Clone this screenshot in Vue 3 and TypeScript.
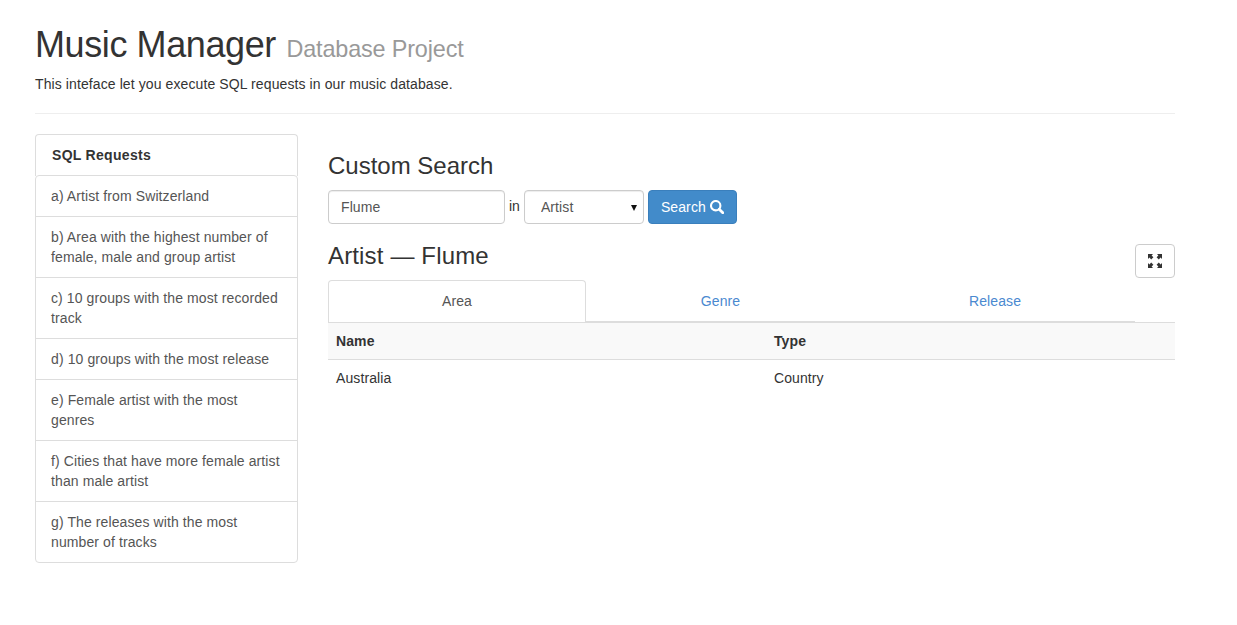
<script setup lang="ts">
const requests: string[] = [
  'a) Artist from Switzerland',
  'b) Area with the highest number of female, male and group artist',
  'c) 10 groups with the most recorded track',
  'd) 10 groups with the most release',
  'e) Female artist with the most genres',
  'f) Cities that have more female artist than male artist',
  'g) The releases with the most number of tracks',
]
</script>

<template>
  <div class="page">
    <header class="head">
      <h1>Music Manager <small>Database Project</small></h1>
      <p>This inteface let you execute SQL requests in our music database.</p>
    </header>
    <hr />
    <div class="columns">
      <aside class="panel">
        <div class="panel-title">SQL Requests</div>
        <div class="list">
          <a v-for="r in requests" :key="r" class="item">{{ r }}</a>
        </div>
      </aside>
      <main class="content">
        <h3 class="h-custom">Custom Search</h3>
        <form class="search" @submit.prevent>
          <input class="input" value="Flume" />
          <span class="in">in</span>
          <div class="select-wrap">
            <select class="select">
              <option>Artist</option>
            </select>
            <span class="caret"></span>
          </div>
          <button class="btn-primary" type="button">
            Search
            <svg class="search-icon" viewBox="0 0 14 14" width="14" height="14" aria-hidden="true">
              <circle cx="5.7" cy="5.7" r="4.7" fill="none" stroke="#fff" stroke-width="2.1" />
              <path d="M9.2 9.2l3.6 3.6" stroke="#fff" stroke-width="2.8" stroke-linecap="round" />
            </svg>
          </button>
        </form>
        <div class="result-head">
          <h3 class="h-result">Artist — Flume</h3>
          <button class="btn-full" type="button" aria-label="Fullscreen">
            <svg viewBox="0 0 14 14" width="14" height="14" aria-hidden="true">
              <path fill="#333" d="M0 0h5L3.6 1.4 5.4 3.2 3.2 5.4 1.4 3.6 0 5zM14 0v5l-1.4-1.4-1.8 1.8-2.2-2.2 1.8-1.8L9 0zM0 14V9l1.4 1.4 1.8-1.8 2.2 2.2-1.8 1.8L5 14zM14 14H9l1.4-1.4-1.8-1.8 2.2-2.2 1.8 1.8L14 9z" />
            </svg>
          </button>
        </div>
        <div class="tabs">
          <div class="tab active area">Area</div>
          <div class="tab genre">Genre</div>
          <div class="tab release">Release</div>
        </div>
        <table class="table">
          <thead>
            <tr><th>Name</th><th>Type</th></tr>
          </thead>
          <tbody>
            <tr><td>Australia</td><td>Country</td></tr>
          </tbody>
        </table>
      </main>
    </div>
  </div>
</template>

<style>
html, body { margin: 0; background: #fff; }
</style>

<style scoped>
.page {
  width: 1140px;
  margin-left: 35px;
  font-family: "Liberation Sans", Arial, sans-serif;
  font-size: 14px;
  line-height: 20px;
  letter-spacing: 0.1px;
  color: #333;
}
.head { padding-top: 25px; }
h1 {
  margin: 0 0 9px;
  font-size: 36px;
  font-weight: 500;
  line-height: 39.6px;
  letter-spacing: -0.4px;
}
h1 small {
  margin-left: 1px;
  font-size: 23.4px;
  font-weight: 400;
  line-height: 1;
  letter-spacing: -0.15px;
  color: #999;
}
.head p { margin: 0; }
hr {
  margin: 19px 0 20px;
  border: 0;
  border-top: 1px solid #eee;
}
.columns { display: flex; align-items: flex-start; gap: 30px; }
.panel {
  width: 263px;
  box-sizing: border-box;
  flex: none;
}
.panel-title {
  box-sizing: border-box;
  height: 42px;
  padding: 10px 16px;
  border: 1px solid #ddd;
  border-bottom: 0;
  border-radius: 4px 4px 0 0;
  font-weight: 700;
  letter-spacing: 0.3px;
}
.list { display: flex; flex-direction: column; margin-top: -1px; }
.item {
  display: block;
  padding: 10px 15px;
  border: 1px solid #ddd;
  margin-bottom: -1px;
  color: #555;
}
.item:first-child { border-radius: 4px 4px 0 0; }
.item:last-child { border-radius: 0 0 4px 4px; margin-bottom: 0; }
.content { flex: 1; min-width: 0; padding-top: 19px; }
h3 {
  margin: 0;
  font-size: 24px;
  font-weight: 500;
  line-height: 26.4px;
  letter-spacing: 0;
}
.h-result { letter-spacing: 0.15px; }
.search { display: flex; align-items: center; margin-top: 11px; }
.input, .select {
  box-sizing: border-box;
  height: 34px;
  border: 1px solid #ccc;
  border-radius: 4px;
  background: #fff;
  font: 14px/20px "Liberation Sans", Arial, sans-serif;
  letter-spacing: 0.1px;
  color: #555;
  box-shadow: inset 0 1px 1px rgba(0, 0, 0, 0.075);
  outline: none;
}
.input { width: 177px; padding: 6px 12px; }
.in { margin: 0 4px; position: relative; top: -1px; letter-spacing: 0; }
.select-wrap { position: relative; width: 120px; height: 34px; }
.select {
  width: 120px;
  padding: 6px 16px;
  appearance: none;
  -webkit-appearance: none;
}
.caret {
  position: absolute;
  left: 107px;
  top: 15px;
  border-left: 3.5px solid transparent;
  border-right: 3.5px solid transparent;
  border-top: 6px solid #111;
}
.btn-primary {
  box-sizing: border-box;
  height: 34px;
  margin-left: 4px;
  padding: 6px 12px;
  border: 1px solid #3a7fbc;
  border-radius: 4px;
  background: #428bca;
  color: #fff;
  font: 14px/20px "Liberation Sans", Arial, sans-serif;
  letter-spacing: 0.1px;
  display: flex;
  align-items: center;
  gap: 4px;
}
.result-head {
  display: flex;
  justify-content: space-between;
  align-items: flex-start;
  margin-top: 19px;
  height: 37px;
}
.btn-full {
  box-sizing: border-box;
  width: 40px;
  height: 34px;
  margin-top: 1px;
  padding: 0;
  border: 1px solid #ccc;
  border-radius: 4px;
  background: #fff;
  display: flex;
  align-items: center;
  justify-content: center;
}
.tabs {
  display: flex;
  width: 807px;
  height: 42px;
  box-sizing: border-box;
  border-bottom: 1px solid #ddd;
}
.tab {
  box-sizing: border-box;
  height: 42px;
  padding: 11px 15px 10px;
  text-align: center;
  color: #4a89d0;
}
.tab.active {
  padding-top: 10px;
  border: 1px solid #ddd;
  border-bottom: 0;
  border-radius: 4px 4px 0 0;
  background: #fff;
  color: #555;
  position: relative;
}
.area { width: 258px; }
.genre { width: 269px; }
.release { width: 280px; }
.table {
  width: 100%;
  border-collapse: collapse;
  table-layout: fixed;
}
.table th, .table td {
  padding: 8px;
  text-align: left;
  line-height: 20px;
}
.table th:first-child, .table td:first-child { width: 422px; }
.table thead tr { background: #f9f9f9; }
.table th {
  border-top: 1px solid #ddd;
  border-bottom: 1px solid #ddd;
  font-weight: 700;
}
</style>
